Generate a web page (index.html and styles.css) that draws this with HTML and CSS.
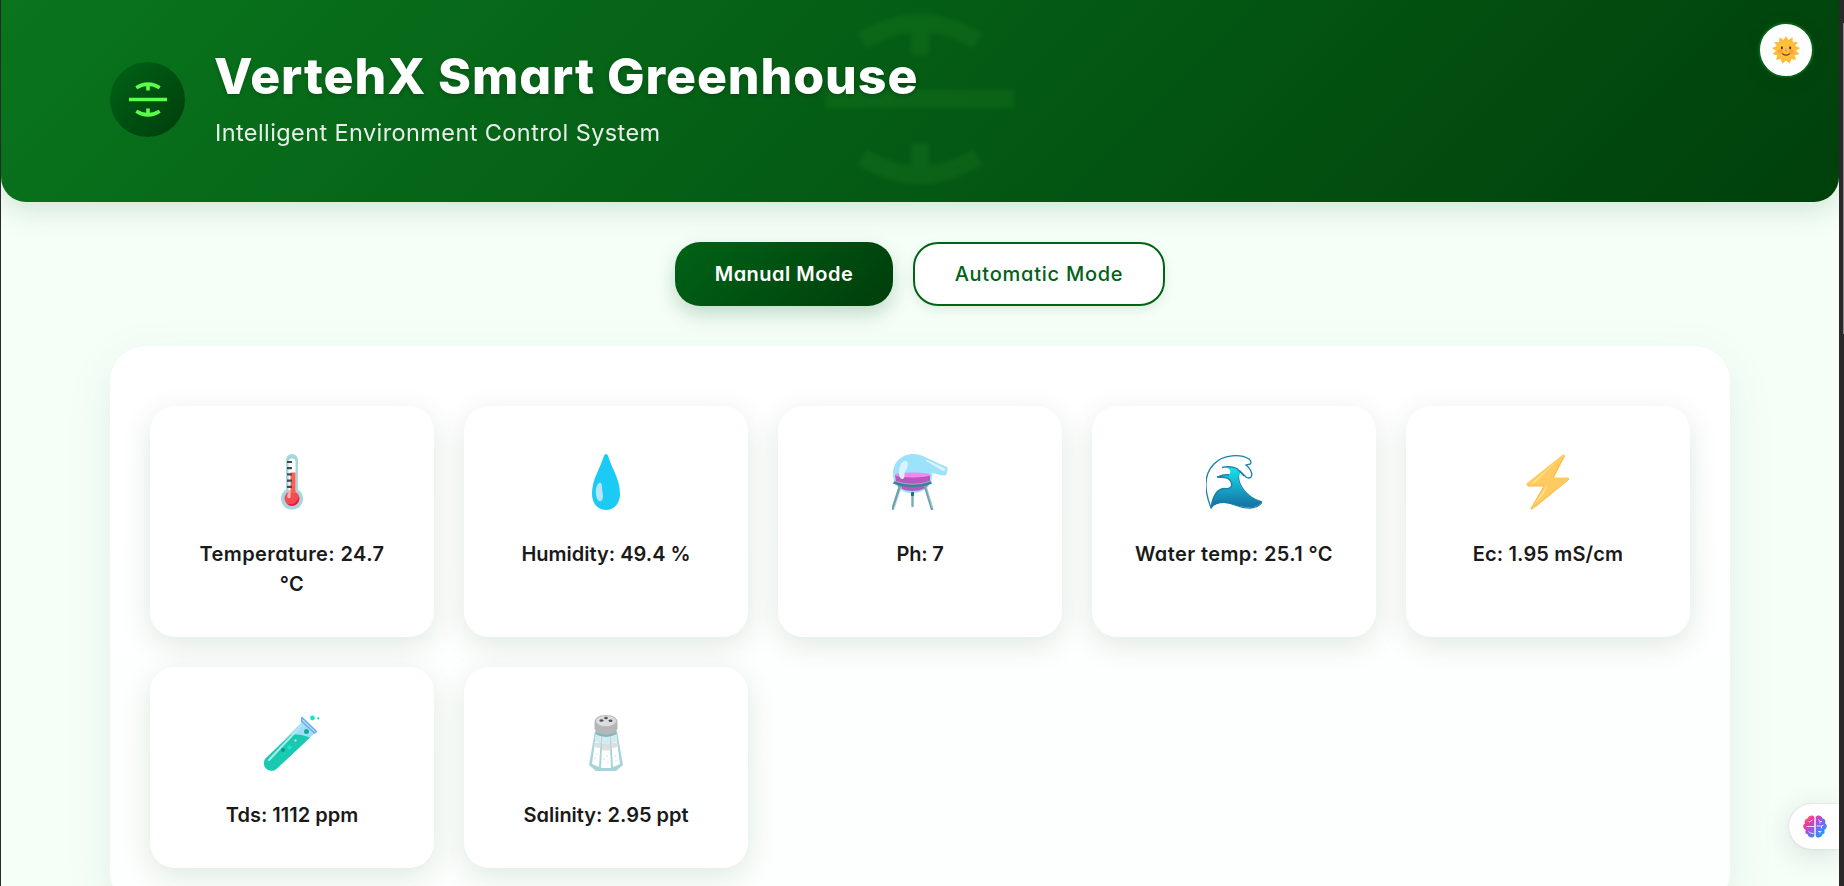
FILE: index.html
```html
<!DOCTYPE html>
<html lang="en">
<head>
<meta charset="utf-8">
<title>VertehX Smart Greenhouse</title>
<link rel="stylesheet" href="styles.css">
</head>
<body>
<svg width="0" height="0" class="defs" aria-hidden="true">
  <defs>
    <symbol id="mark" viewBox="0 0 188 172">
      <path d="M0 86H188M94 8V42M94 130V164" stroke="currentColor" stroke-width="18" fill="none"/>
      <path d="M36 28Q94 -8 152 28M36 144Q94 180 152 144" stroke="currentColor" stroke-width="18" fill="none"/>
    </symbol>
    <linearGradient id="wave" x1="0" y1="0" x2="0" y2="1"><stop offset="0.1" stop-color="#18d9e8"/><stop offset="0.9" stop-color="#1579a8"/></linearGradient>
    <linearGradient id="brain" x1="0" y1="0" x2="1" y2="1"><stop offset="0" stop-color="#ff9f2e"/><stop offset="0.25" stop-color="#f5359c"/><stop offset="0.5" stop-color="#8f5be8"/><stop offset="0.9" stop-color="#0aa2ff"/></linearGradient>
  </defs>
</svg>
<div class="page">
  <header class="header">
    <svg class="watermark"><use href="#mark"/></svg>
    <div class="brand">
      <div class="logo"><svg width="38" height="35"><use href="#mark"/></svg></div>
      <div class="titles">
        <h1 class="title">VertehX Smart Greenhouse</h1>
        <p class="subtitle">Intelligent Environment Control System</p>
      </div>
    </div>
    <button class="theme" aria-label="Theme">
      <svg width="28" height="28" viewBox="0 0 28 28">
        <path fill="#fdbb33" d="M14 0l2.400 4 4.100-2.700.3 4.900 4.900-.3-2.500 4.200 4.800 1.900-4 2.800 3.400 3.500-4.800 1 1.300 4.800-4.700-1.200-1.400 4.700-3.800-3.200-3.800 3.200-1.500-4.700-4.600 1.200 1.200-4.800-4.700-1 3.400-3.500-4-2.800 4.800-1.900-2.500-4.200 4.900.3.300-4.900 4.100 2.700z"/>
        <circle cx="14" cy="14.200" r="9" fill="#ffc23a"/>
        <circle cx="8.500" cy="15.500" r="2.500" fill="#ff8f4a" opacity=".7"/><circle cx="19.500" cy="15.500" r="2.500" fill="#ff8f4a" opacity=".7"/>
        <ellipse cx="9.900" cy="11.800" rx="1.100" ry="1.500" fill="#543930"/><ellipse cx="18.100" cy="11.800" rx="1.100" ry="1.500" fill="#543930"/>
        <path d="M13.300 12.500v3q.7.800 1.400 0v-3" fill="#f78c2f"/>
        <path d="M10.500 17.800q3.500 2.800 7 0" stroke="#6b4030" stroke-width="1.200" fill="none" stroke-linecap="round"/>
      </svg>
    </button>
  </header>

  <nav class="modes">
    <button class="mode mode-active">Manual Mode</button>
    <button class="mode">Automatic Mode</button>
  </nav>

  <main class="panel">
    <article class="card">
      <svg class="icon" viewBox="0 0 56 56">
        <path d="M22 6a6 6 0 0 1 12 0V35.500a11 11 0 1 1-12 0z" fill="#a8d6dc"/>
        <path d="M24.500 8a3.500 3.500 0 0 1 7 0V36h-7z" fill="#fff"/>
        <circle cx="28" cy="44.500" r="7.400" fill="#f44b50"/><path d="M26.500 18.500h5V39h-5z" fill="#fb5e56"/>
        <path d="M35.200 43a7.400 7.400 0 0 1-12 7q8 2 12-7z" fill="#ed1645"/>
        <path d="M26.600 36v7q-.5 1.800-2.800 1.200-1.500-3 .5-5.200v-3z" fill="#fcb5b0"/>
        <path d="M23 8h5M23 14.200h5M23 20.400h5M23 26.600h5M23 32.800h5" stroke="#434c50" stroke-width="2.200"/>
      </svg>
      <p class="label label-wide">Temperature: 24.7 °C</p>
    </article>
    <article class="card">
      <svg class="icon" viewBox="0 0 56 56">
        <path d="M28 0q1.300 0 2 1.800C34 15 42 25 42 40c0 9-5.500 16-14 16s-14-7-14-16C14 25 22 15 26 1.800 26.700 0 28 0 28 0z" fill="#1bcbf5"/>
        <path d="M22 28.500q2 .3 2 5c0 4 2 8 .3 12.300-1 2-3.700 1.600-4.800-.2-2.500-4.500-2.500-15.500 2.500-17.100z" fill="#b5e7fb"/>
      </svg>
      <p class="label">Humidity: 49.4 %</p>
    </article>
    <article class="card">
      <svg class="icon" viewBox="0 0 56 56">
        <path d="M1 20C1 7 11 0 21 0c9 0 17 6 34 13 1 1 .7 7-2 8.500-4 0-8-1.500-13-2.500C41 31 34 39 20 39 8 39 1 31 1 20z" fill="#9be2fa"/>
        <path d="M34.500 5.500 53 14.500v2.500h-2L34 7z" fill="#daf5ff"/>
        <path d="M3 21q17-4 35 0v7q-4 9-17.500 9T4 28z" fill="#b957c0"/><ellipse cx="20.500" cy="21" rx="17.500" ry="2.400" fill="#f387ef"/>
        <path d="M12.500 7c3-.5 4 2 3 6-1 3-3 4-3 8 0 3-1 4-2.500 4S6.500 22 7 17s2.500-9.500 5.500-10z" fill="#d7f3fd"/>
        <path d="M8 32 .5 55M33 32l7 23" stroke="#6da4b0" stroke-width="2.600" stroke-linecap="round"/><path d="M9.500 33 2 55M34.500 33l6 21" stroke="#b5d6dd" stroke-width=".8"/>
        <path d="M20.500 39v13" stroke="#7eadb8" stroke-width="2.500" stroke-linecap="round"/><path d="M20.500 38v4" stroke="#257180" stroke-width="3"/>
        <path d="M1.500 28.500q19 7 38 0" stroke="#2f8694" stroke-width="2.500" fill="none"/><path d="M2 27q19 6.500 37 0" stroke="#8db5c0" stroke-width="1" fill="none"/>
      </svg>
      <p class="label label-tight">Ph: 7</p>
    </article>
    <article class="card">
      <svg class="icon" viewBox="0 0 56 56">
        <path d="M5 54C-2 36-2 20 8 10 17 0 35 0 43 5q3 2.500 1.500 5l-4.500 1c4 3 6.500 8 5.500 11q-1 3-5 1.500L34 17c-5 9 4 26 22 31-4 8-18 7-27 3-10-4-19-4-24 3z" fill="#fff" stroke="#1b7fa6" stroke-width="1.300"/>
        <path d="M5 53C7 42 11 35 18 34.500q6 1 7.500-2.500c1-5-2.500-8-6.500-8.500l-8-.5q6-2.500 12-2.500 3-3-.5-6-3-1.500-6-1 8-2 14 1l4 4c-7 7 4 24 21 29.500-4 7-16 6.500-26 3q-15-5-24.500 2z" fill="url(#wave)"/>
        <path d="M16 13.500q8-2 15 1l7 7.500M11 23q8-3 12-2M11 23l8 .5c4 .5 7.500 4 6.500 8.500q-1.500 3.500-7.500 2.500C11 35 7 42 5 53" fill="none" stroke="#1b7fa6" stroke-width="1.300"/>
      </svg>
      <p class="label label-wide">Water temp: 25.1 °C</p>
    </article>
    <article class="card">
      <svg class="icon" viewBox="0 0 56 56">
        <path d="M43 .6 6.500 29.500q-.5 2 1 2.500H24L10.500 54.500q.5 2 2 .8L49 25.500q.5-2-1.500-2H34L45 1.500q-.5-1.500-2-.9z" fill="#ffca5f"/>
        <path d="M40 4 17 27q-3 3-6 2.500zM12 53.500 27 31q-.5 5-4 10z" fill="#ffe08a"/><path d="M44.500 2 33 23.500M8 32h16L11 55M49 25 15 53" stroke="#f9b43f" stroke-width=".9" fill="none"/>
      </svg>
      <p class="label label-loose">Ec: 1.95 mS/cm</p>
    </article>
    <article class="card">
      <svg class="icon" viewBox="0 0 56 56">
        <path d="M38 7 51 18 13 53.500A7.600 7.600 0 0 1 2 43z" fill="#a3dcfb"/>
        <path d="M27 19.500q7-1 19 3L13 53.500A7.600 7.600 0 0 1 2 43z" fill="#19c9b0"/>
        <path d="m38 2.500 14.500 14-2 1.500L37.500 6z" fill="#b5e3fb" stroke="#6da9e4" stroke-width="1.500" stroke-linejoin="round"/>
        <path d="M37 11 5 45" stroke="#a8eee8" stroke-width="2" stroke-linecap="round"/>
        <circle cx="42.500" cy="16.500" r="2.500" fill="#13a996"/><circle cx="48.500" cy="3" r="2.400" fill="#13e5ce"/><circle cx="54.300" cy="3.300" r="1.100" fill="#19c9b0"/>
        <circle cx="25.500" cy="32.500" r="2.100" fill="#10efcf"/><circle cx="19" cy="35" r="2" fill="#0b9688"/><circle cx="31.500" cy="25.500" r="1.100" fill="#c8fff4"/>
      </svg>
      <p class="label">Tds: 1112 ppm</p>
    </article>
    <article class="card">
      <svg class="icon" viewBox="0 0 56 56">
        <path d="M17 16h22l6 34-7 6H18l-7-6z" fill="#a5d5d9"/>
        <path d="M18 19h5l-2 33-7-3zM24.500 20h7l1.500 33H23zM33 19h5l4 30-7 3z" fill="#fff"/>
        <path d="M18 18h5l-1 10-5-1zM24.500 19h7l.3 10h-7.500zM33 18h5l1 9-5 1z" fill="#d3eaf2"/>
        <path d="M17 28h5.300l-.4 5-5.500-1zM24 29h8.500v6q-5 1-8.500 0zM34 28h5l.6 4-5.300 1z" fill="#dedede"/>
        <g fill="#cfd3d5"><circle cx="17" cy="43" r=".7"/><circle cx="19" cy="39" r=".7"/><circle cx="26" cy="44" r=".7"/><circle cx="29" cy="41" r=".7"/><circle cx="30" cy="47" r=".7"/><circle cx="37" cy="41" r=".7"/><circle cx="38" cy="46" r=".7"/></g>
        <path d="M16.500 8q0-8 11.500-8t11.500 8v6q-2 2-2 4-9 5-19 0 0-2-2-4z" fill="#b5b6b8"/>
        <ellipse cx="28" cy="6" rx="10" ry="5.300" fill="#dcdcdd"/><path d="M17.500 17q10.500 6 21 0v2q-10.500 6-21 0z" fill="#7fb5bb"/>
        <g fill="#505356"><ellipse cx="28" cy="3" rx="1.800" ry="1.200"/><ellipse cx="23.500" cy="5.500" rx="2" ry="1.200"/><ellipse cx="32.500" cy="5.700" rx="2" ry="1.200"/></g>
      </svg>
      <p class="label">Salinity: 2.95 ppt</p>
    </article>
  </main>

  <aside class="assist">
    <svg width="24" height="23" viewBox="0 0 24 23">
      <path fill="url(#brain)" d="M11.300 2v19c-1.500 2.500-6 2-6.500-1.500-2.500-.5-3-2.500-2-4.500C-.5 13.500-.5 9.500 2 8.500 1 6 2 3.500 4.500 3.500 5.500 0 10-.5 11.300 2zM12.700 2v19c1.500 2.500 6 2 6.500-1.500 2.500-.5 3-2.500 2-4.500 3.300-1.500 3.300-5.500.8-6.500 1-2.500 0-5-2.500-5C18.500 0 14-.5 12.700 2z"/>
      <path d="M5.500 6.500q1 1.500 2-.5l2-1M3.500 11.500H11M5.500 16.500q1 2 5 2M15.500 4.500l1.500 2h2M17 6.500v2M13.500 11h5l2-1M18.500 11v2.500M15 16.500h3.500M17 16.500v2" stroke="#fff" stroke-opacity=".8" stroke-width="1" fill="none"/>
    </svg>
  </aside>
</div>
</body>
</html>
```
FILE: styles.css
```css
* { box-sizing: border-box; margin: 0; }
body {
  height: 886px;
  overflow: hidden;
  padding: 0 5px 0 1px;
  background: linear-gradient(#8f8c8d, #8f8c8d) right 23px / 1px 311px no-repeat, #2b2829;
  font-family: Inter, "Open Sans", sans-serif;
  font-feature-settings: "cv11";
}
button { font: inherit; font-feature-settings: inherit; }
.defs { position: absolute; }
.page {
  position: relative;
  height: 886px;
  overflow: hidden;
  background: #f5fff8;
}
.header {
  position: relative;
  display: flex;
  align-items: center;
  height: 201.6px;
  padding: 0 109px;
  border-radius: 0 0 25px 25px;
  background: linear-gradient(135deg, #09751d 0%, #045b14 50%, #00400b 100%);
  box-shadow: 0 8px 30px rgba(0, 77, 29, .15);
}
.watermark {
  position: absolute;
  left: 825px;
  top: 13px;
  width: 188px;
  height: 172px;
  color: #36a330;
  opacity: .14;
  filter: blur(2px);
}
.brand { position: relative; display: flex; align-items: center; gap: 30px; }
.logo {
  display: flex;
  align-items: center;
  justify-content: center;
  width: 75px;
  height: 75px;
  margin-top: -3px;
  border-radius: 50%;
  background: linear-gradient(135deg, #006316, #003d0b);
  color: #5cff4a;
}
.titles { padding-bottom: 9px; }
.title {
  margin-left: -1px;
  color: #fff;
  font-size: 50px;
  font-weight: 800;
  letter-spacing: .92px;
  line-height: 69px;
  text-shadow: 0 2px 4px rgba(0, 0, 0, .2);
  white-space: nowrap;
}
.subtitle {
  margin-top: 4px;
  color: #fff;
  opacity: .9;
  font-size: 23.5px;
  font-weight: 400;
  letter-spacing: .4px;
  line-height: 36px;
}
.theme {
  position: absolute;
  right: 25px;
  top: 22px;
  display: flex;
  align-items: center;
  justify-content: center;
  width: 56px;
  height: 56px;
  padding: 0;
  border: 2px solid #006316;
  border-radius: 50%;
  background: #fff;
  box-shadow: 0 4px 15px rgba(0, 77, 29, .15);
}
.modes { display: flex; justify-content: center; gap: 20px; padding: 40px 0; }
.mode {
  width: 252px;
  height: 64px;
  padding: 0;
  border: 2px solid #006316;
  border-radius: 25px;
  background: #fff;
  color: #006316;
  font-size: 20px;
  font-weight: 500;
  letter-spacing: .75px;
  box-shadow: 0 4px 12px rgba(0, 77, 29, .1);
}
.mode-active {
  width: 218px;
  border: 0;
  background: linear-gradient(135deg, #006316, #003d0b);
  color: #fff;
  font-weight: 600;
  letter-spacing: .5px;
  box-shadow: 0 8px 20px rgba(0, 77, 29, .22);
}
.panel {
  display: grid;
  grid-template-columns: repeat(5, 1fr);
  grid-template-rows: 231px 201px;
  gap: 30px;
  width: 1620px;
  height: 562px;
  margin: 0 auto;
  padding: 60px 40px 40px;
  border-radius: 36px;
  background: linear-gradient(#fff, #fcfffd);
  box-shadow: 0 15px 50px rgba(0, 77, 29, .08);
}
.card {
  display: flex;
  flex-direction: column;
  align-items: center;
  gap: 29px;
  padding: 48px 40px 0;
  border-radius: 25px;
  background: #fff;
  box-shadow: 0 8px 30px rgba(0, 77, 29, .12);
}
.icon { display: block; width: 56px; height: 56px; }
.label {
  color: #1a1a1a;
  font-size: 20px;
  font-weight: 600;
  line-height: 30px;
  text-align: center;
}
.label-wide { letter-spacing: .4px; }
.label-loose { letter-spacing: .15px; }
.label-tight { letter-spacing: -.2px; }
.assist {
  position: absolute;
  right: 0;
  bottom: 37px;
  display: flex;
  align-items: center;
  width: 50px;
  height: 45px;
  padding-left: 14px;
  border-radius: 23px 0 0 23px;
  background: #fff;
  box-shadow: 0 6px 30px rgba(0, 30, 15, .13), 0 0 2px rgba(60, 40, 90, .2);
}
```
